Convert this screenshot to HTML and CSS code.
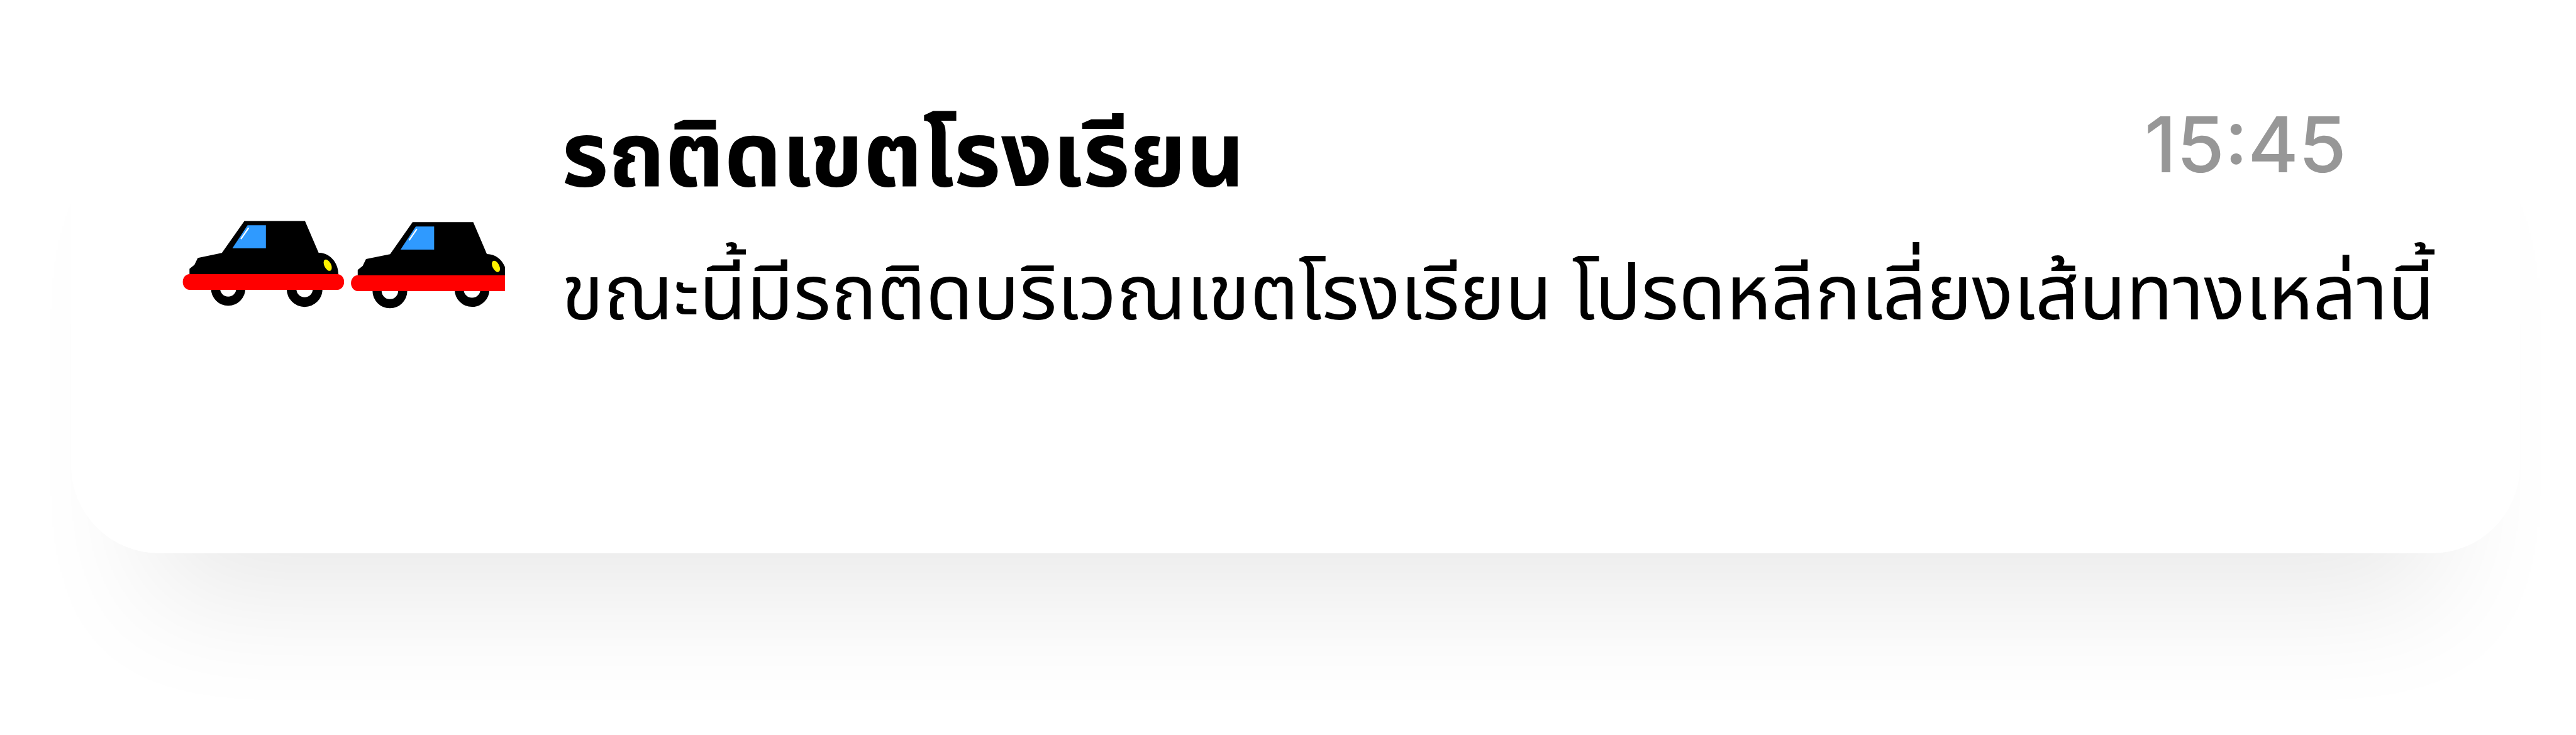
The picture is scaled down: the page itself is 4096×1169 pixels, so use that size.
FILE: index.html
```html
<!DOCTYPE html>
<html lang="th">
<head>
<meta charset="utf-8">
<meta name="viewport" content="width=device-width, initial-scale=1">
<title>รถติดเขตโรงเรียน</title>
<link rel="stylesheet" href="styles.css">
</head>
<body>
<article class="notice">
  <svg class="cars" viewBox="84 100 1634 445" aria-hidden="true">
    <defs>
      <g id="car-body">
        <path d="M398 101H705L774 262C829 262 874 310 874 372H120V343L145 323L162 288L284 263Z"/>
        <path fill="#2f9aff" d="M414 123H507V240H337Z"/>
        <path stroke="#fff" stroke-width="7" stroke-linecap="round" d="M418 138L382 190"/>
        <ellipse cx="820" cy="325" rx="17" ry="31" fill="#fff200" transform="rotate(-27 820 325)"/>
        <rect x="86" y="370" width="817" height="80" rx="34" ry="40" fill="#f00"/>
      </g>
    </defs>
    <g fill="none" stroke="#000">
      <circle cx="316" cy="443" r="64" stroke-width="46"/>
      <circle cx="703" cy="446" r="66" stroke-width="49"/>
      <circle cx="1135" cy="455" r="65" stroke-width="46"/>
      <circle cx="1551" cy="448" r="65" stroke-width="46"/>
    </g>
    <use href="#car-body"/>
    <use href="#car-body" x="852" y="6"/>
  </svg>
  <div class="content">
    <header class="heading">
      <h1 class="title">รถติดเขตโรงเรียน</h1>
      <time class="time" datetime="15:45">15:45</time>
    </header>
    <p class="message">ขณะนี้มีรถติดบริเวณเขตโรงเรียน โปรดหลีกเลี่ยงเส้นทางเหล่านี้</p>
  </div>
</article>
</body>
</html>
```
FILE: styles.css
```css
* {
  box-sizing: border-box;
}

body {
  min-height: 100vh;
  margin: 0;
  background: #fff;
  color: #000;
  font-family: "Noto Sans Thai", "Noto Sans", sans-serif;
}

.notice {
  display: flex;
  align-items: flex-start;
  gap: 90px;
  margin: 0 89px 0 113px;
  padding: 142px 120px 300px 177px;
  border-radius: 140px;
  background: #fff;
  box-shadow: 0 200px 200px -130px rgba(0, 0, 0, 0.09);
}

.cars {
  flex: none;
  width: 513px;
  height: 140px;
  margin-top: 209px;
}

.content {
  flex: 1;
  min-width: 0;
}

.heading {
  display: flex;
  justify-content: space-between;
}

.title {
  margin: 0;
  font-size: 144px;
  line-height: 220px;
}

.time {
  padding-right: 156px;
  color: #979797;
  font-family: Inter, sans-serif;
  font-size: 123px;
  font-weight: 500;
  line-height: 176px;
}

.message {
  margin: 0;
  font-size: 122px;
  line-height: 218px;
  white-space: nowrap;
}
```
